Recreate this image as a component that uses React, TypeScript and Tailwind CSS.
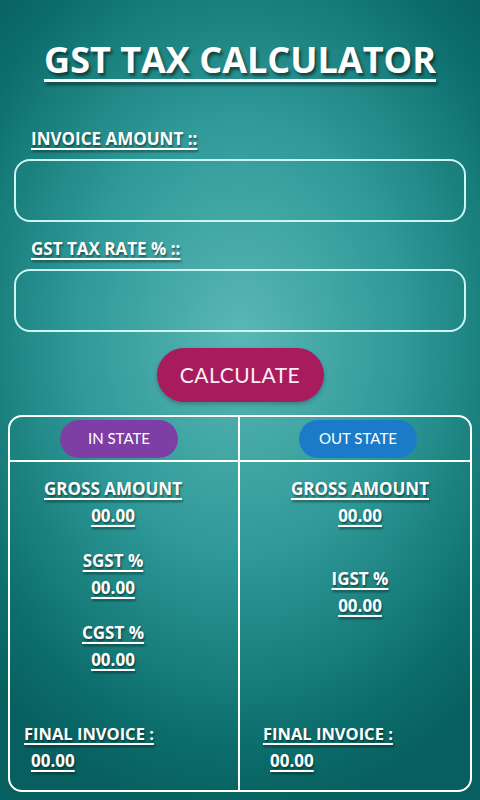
import React from "react";

const LABEL =
  "font-['Open_Sans','Noto_Sans',sans-serif] font-bold text-white underline decoration-[1.5px] underline-offset-[3px] [text-shadow:1px_2px_2px_rgba(0,0,0,0.45)]";

const Field = ({ label }: { label: string }) => (
  <div className="flex flex-col">
    <div className="px-[31px]">
      <span className={`${LABEL} text-[17px] leading-[24px]`}>{label}</span>
    </div>
    <div className="mx-[14px] mt-[8px] h-[63px] rounded-[16px] border-2 border-[#cdf6f2]" />
  </div>
);

const Stat = ({ label, value }: { label: string; value: string }) => (
  <div className="flex flex-col items-center">
    <span className={`${LABEL} text-[17px] leading-[27px]`}>{label}</span>
    <span className={`${LABEL} text-[17px] leading-[27px]`}>{value}</span>
  </div>
);

const Final = () => (
  <div className="flex flex-col items-start">
    <span className={`${LABEL} text-[16.5px] leading-[27px]`}>FINAL INVOICE :</span>
    <span className={`${LABEL} text-[17px] leading-[27px] ml-[7px]`}>00.00</span>
  </div>
);

export default function App() {
  return (
    <div className="w-full h-[800px] overflow-hidden flex flex-col bg-[radial-gradient(ellipse_75%_60%_at_50%_42%,#5ab7b5_0%,#2f9a98_45%,#0c6e6c_85%,#07605f_100%)]">
      <div className="mt-[35px] flex justify-center">
        <h1 className="font-['Open_Sans','Noto_Sans',sans-serif] font-bold text-[36px] leading-[49px] text-white underline decoration-[3px] underline-offset-[6px] [text-shadow:2px_3px_3px_rgba(0,0,0,0.5)]">
          GST TAX CALCULATOR
        </h1>
      </div>

      <div className="mt-[43px] flex flex-col gap-[15px]">
        <Field label="INVOICE AMOUNT ::" />
        <Field label="GST TAX RATE % ::" />
      </div>

      <div className="mt-[16px] flex justify-center">
        <button className="w-[167px] h-[54px] rounded-full bg-[#a81c5d] shadow-[0_2px_4px_rgba(0,0,0,0.25)] font-['Lato','Open_Sans',sans-serif] text-[21px] tracking-[0.5px] text-[#fdeef5]">
          CALCULATE
        </button>
      </div>

      <div className="mx-[8px] mt-[13px] h-[377px] rounded-[14px] border-2 border-white flex flex-col">
        <div className="h-[45px] grid grid-cols-2 border-b-2 border-white">
          <div className="flex items-center justify-center pr-[10px] border-r-2 border-white">
            <div className="w-[118px] h-[38px] rounded-full bg-[#7d3fa6] flex items-center justify-center font-['Lato','Open_Sans',sans-serif] text-[15px] text-white">
              IN STATE
            </div>
          </div>
          <div className="flex items-center justify-center pl-[6px]">
            <div className="w-[118px] h-[38px] rounded-full bg-[#1b7bc9] flex items-center justify-center font-['Lato','Open_Sans',sans-serif] text-[15px] text-white">
              OUT STATE
            </div>
          </div>
        </div>
        <div className="flex-1 grid grid-cols-2">
          <div className="flex flex-col border-r-2 border-white pt-[13px] pb-[16px]">
            <div className="flex flex-col gap-[18px] pr-[22px]">
              <Stat label="GROSS AMOUNT" value="00.00" />
              <Stat label="SGST %" value="00.00" />
              <Stat label="CGST %" value="00.00" />
            </div>
            <div className="mt-auto pl-[14px]">
              <Final />
            </div>
          </div>
          <div className="flex flex-col pt-[13px] pb-[16px]">
            <div className="flex flex-col gap-[36px] pl-[10px]">
              <Stat label="GROSS AMOUNT" value="00.00" />
              <Stat label="IGST %" value="00.00" />
            </div>
            <div className="mt-auto pl-[23px]">
              <Final />
            </div>
          </div>
        </div>
      </div>
    </div>
  );
}
